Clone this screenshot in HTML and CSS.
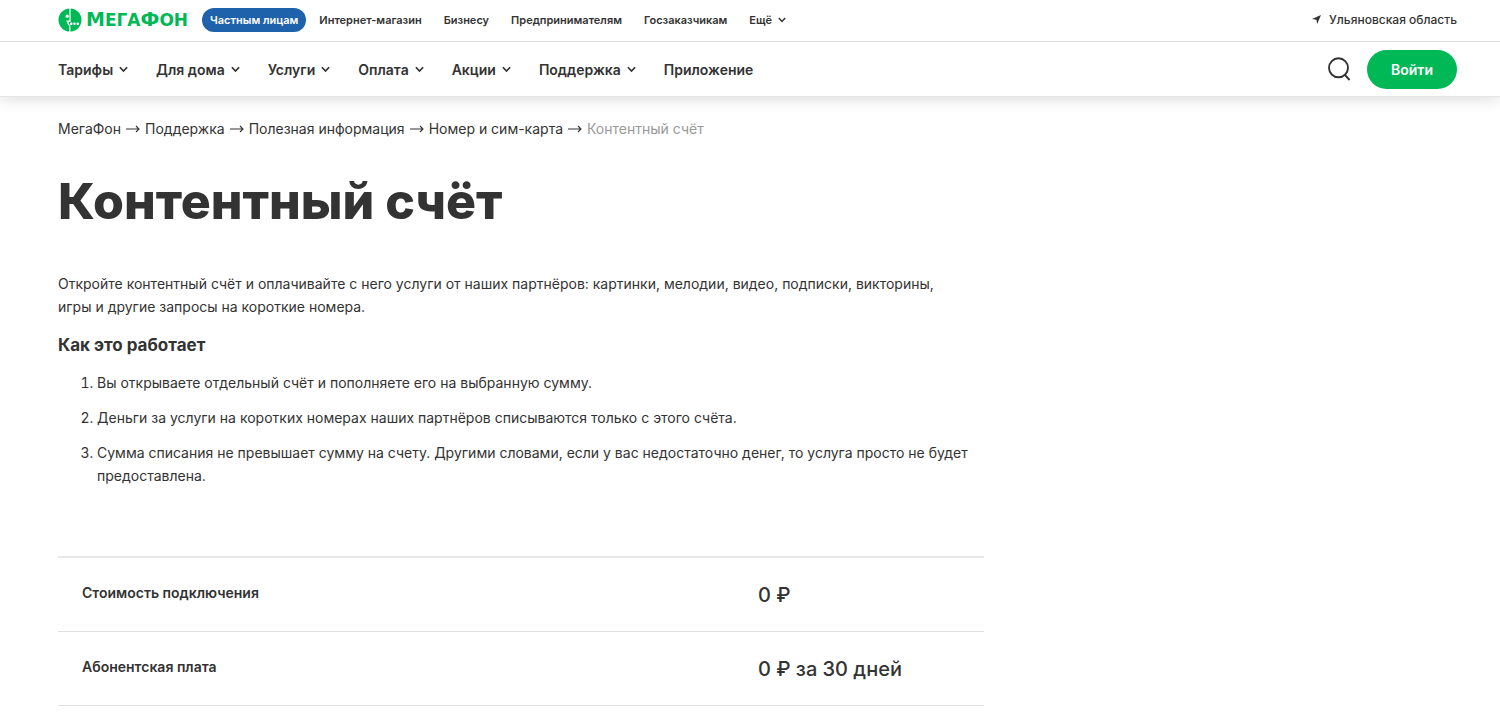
FILE: index.html
```html
<!DOCTYPE html>
<html lang="ru">
<head>
<meta charset="utf-8">
<meta name="viewport" content="width=device-width, initial-scale=1">
<title>Контентный счёт</title>
<link rel="stylesheet" href="styles.css">
</head>
<body>
<svg class="sprite" aria-hidden="true">
  <symbol id="chevron" viewBox="0 0 8 6"><path d="M0.8 1 L4 4.4 L7.2 1" fill="none" stroke="currentColor" stroke-width="1.5"/></symbol>
  <symbol id="arrow" viewBox="0 0 14 8"><path d="M0 4 H13 M10 1 L13 4 L10 7" fill="none" stroke="currentColor" stroke-width="1.1"/></symbol>
</svg>
<header class="header">
  <div class="topbar">
    <a class="logo" href="#" aria-label="МегаФон">
      <svg class="logo-mark" viewBox="0 0 24 24" aria-hidden="true">
        <circle cx="12" cy="12" r="11.5" fill="#00b956"/>
        <path d="M11.4 0 H12.6 V13.4 H11.4 Z" fill="#fff"/>
        <path d="M12.6 12.6 H8.4 V13.8 H9.2 Q9.2 17 11.2 18 V24 H12.4 V17.4 Q10.6 16.4 10.6 13.8 H12.6 Z" fill="#fff"/>
        <circle cx="9.2" cy="8.2" r="1.6" fill="#fff"/>
        <circle cx="13.2" cy="15.8" r="1.3" fill="#fff"/>
        <circle cx="16.5" cy="15.8" r="1.3" fill="#fff"/>
        <circle cx="19.8" cy="15.8" r="1.3" fill="#fff"/>
      </svg>
      <span class="logo-text"><span class="logo-cap">М</span>ЕГА<span class="logo-cap">Ф</span>ОН</span>
    </a>
    <nav class="segments">
      <a class="segment segment-active" href="#">Частным лицам</a>
      <a class="segment" href="#">Интернет-магазин</a>
      <a class="segment" href="#">Бизнесу</a>
      <a class="segment" href="#">Предпринимателям</a>
      <a class="segment" href="#">Госзаказчикам</a>
      <button class="segment more" type="button">Ещё<svg class="chevron-small"><use href="#chevron"/></svg></button>
    </nav>
    <button class="region" type="button">
      <svg class="region-icon" viewBox="0 0 9 9" aria-hidden="true"><path d="M9 0 L5.2 9 L4.4 4.7 L0 4 Z" fill="currentColor"/></svg>
      Ульяновская область
    </button>
  </div>
  <div class="mainbar">
    <nav class="menu">
      <a class="menu-item" href="#">Тарифы<svg class="chevron"><use href="#chevron"/></svg></a>
      <a class="menu-item" href="#">Для дома<svg class="chevron"><use href="#chevron"/></svg></a>
      <a class="menu-item" href="#">Услуги<svg class="chevron"><use href="#chevron"/></svg></a>
      <a class="menu-item" href="#">Оплата<svg class="chevron"><use href="#chevron"/></svg></a>
      <a class="menu-item" href="#">Акции<svg class="chevron"><use href="#chevron"/></svg></a>
      <a class="menu-item" href="#">Поддержка<svg class="chevron"><use href="#chevron"/></svg></a>
      <a class="menu-item" href="#">Приложение</a>
    </nav>
    <button class="search" type="button" aria-label="Поиск">
      <svg class="search-icon" viewBox="0 0 24 24"><circle cx="11.5" cy="10.8" r="9.5" fill="none" stroke="currentColor" stroke-width="1.9"/><path d="M17.4 17.4 L22.6 23" stroke="currentColor" stroke-width="2"/></svg>
    </button>
    <button class="login" type="button">Войти</button>
  </div>
</header>
<main class="page">
  <nav class="crumbs" aria-label="Навигация">
    <a class="crumb" href="#">МегаФон</a><svg class="arrow"><use href="#arrow"/></svg>
    <a class="crumb" href="#">Поддержка</a><svg class="arrow"><use href="#arrow"/></svg>
    <a class="crumb" href="#">Полезная информация</a><svg class="arrow"><use href="#arrow"/></svg>
    <a class="crumb" href="#">Номер и сим-карта</a><svg class="arrow"><use href="#arrow"/></svg>
    <span class="crumb-current">Контентный счёт</span>
  </nav>
  <h1 class="title">Контентный счёт</h1>
  <article class="content">
    <p class="lead">Откройте контентный счёт и оплачивайте с него услуги от наших партнёров: картинки, мелодии, видео, подписки, викторины,<br>игры и другие запросы на короткие номера.</p>
    <h2 class="subtitle">Как это работает</h2>
    <ol class="steps">
      <li class="step">Вы открываете отдельный счёт и пополняете его на выбранную сумму.</li>
      <li class="step">Деньги за услуги на коротких номерах наших партнёров списываются только с этого счёта.</li>
      <li class="step">Сумма списания не превышает сумму на счету. Другими словами, если у вас недостаточно денег, то услуга просто не будет<br>предоставлена.</li>
    </ol>
    <table class="prices">
      <tr><th class="price-name" scope="row">Стоимость подключения</th><td class="price-value">0 ₽</td></tr>
      <tr><th class="price-name" scope="row">Абонентская плата</th><td class="price-value">0 ₽ за 30 дней</td></tr>
    </table>
  </article>
</main>
</body>
</html>
```
FILE: styles.css
```css
* { box-sizing: border-box; }
body {
  margin: 0;
  overflow: hidden;
  background: #fff;
  color: #333;
  font: 14px/23px Inter, "Liberation Sans", sans-serif;
}
a { color: inherit; text-decoration: none; }
button {
  padding: 0;
  border: 0;
  background: none;
  color: inherit;
  font: inherit;
  cursor: pointer;
}
.sprite { display: none; }
.header {
  border-bottom: 1px solid #e6e6e6;
  box-shadow: 0 2px 14px rgba(0, 0, 0, 0.14);
}
.topbar, .mainbar {
  display: flex;
  align-items: center;
  padding: 0 43px 0 58px;
}
.topbar {
  height: 42px;
  padding-bottom: 2px;
  border-bottom: 1px solid #dcdcdc;
}
.mainbar { height: 54px; }
.logo {
  display: flex;
  align-items: center;
  gap: 4px;
  width: 144px;
  color: #00b956;
}
.logo-mark { width: 24px; height: 24px; flex: none; }
.logo-text { font: 700 17px/20px "DejaVu Sans", sans-serif; }
.logo-cap { font-size: 19px; }
.segments {
  display: flex;
  align-items: center;
  gap: 22px;
  font-size: 11px;
  font-weight: 600;
  line-height: 24px;
}
.segment { white-space: nowrap; }
.segment-active {
  margin-right: -9px;
  padding: 0 8px;
  border-radius: 12px;
  background: #1e62ab;
  color: #fff;
}
.more, .region { display: flex; align-items: center; }
.chevron-small { width: 8px; height: 6px; margin-left: 6px; }
.region {
  gap: 8px;
  margin-left: auto;
  font-size: 12px;
  font-weight: 500;
}
.region-icon { width: 9px; height: 9px; }
.menu { display: flex; gap: 28px; font-weight: 600; }
.menu-item { display: flex; align-items: center; white-space: nowrap; }
.chevron { width: 9px; height: 7px; margin-left: 6px; }
.search { margin-left: auto; }
.search-icon { display: block; width: 24px; height: 24px; }
.login {
  width: 90px;
  height: 39px;
  margin-left: 16px;
  border-radius: 20px;
  background: #00b956;
  color: #fff;
  font-weight: 600;
}
.page { padding: 20px 43px 0 58px; }
.crumbs { display: flex; align-items: center; gap: 5px; white-space: nowrap; }
.arrow { width: 14px; height: 8px; }
.crumb-current { color: #999; }
.title {
  margin: 30px 0 0;
  font-size: 50px;
  font-weight: 800;
  line-height: 62px;
}
.content { max-width: 926px; padding-top: 40px; }
.lead { margin: 0; white-space: nowrap; }
.subtitle { margin: 16px 0 14px; font-size: 17px; font-weight: 700; line-height: 23px; }
.steps { margin: 0; padding-left: 39px; }
.step { margin-bottom: 12px; white-space: nowrap; }
.prices {
  width: 100%;
  margin-top: 69px;
  border-collapse: collapse;
  border-top: 2px solid #e8e8e8;
}
.price-name, .price-value {
  height: 74px;
  padding: 0 0 0 24px;
  border-bottom: 1px solid #e2e2e2;
  text-align: left;
}
.price-name { width: 73%; padding-bottom: 4px; font-weight: 600; }
.price-value { padding-top: 2px; font-size: 20px; font-weight: 500; }
```
